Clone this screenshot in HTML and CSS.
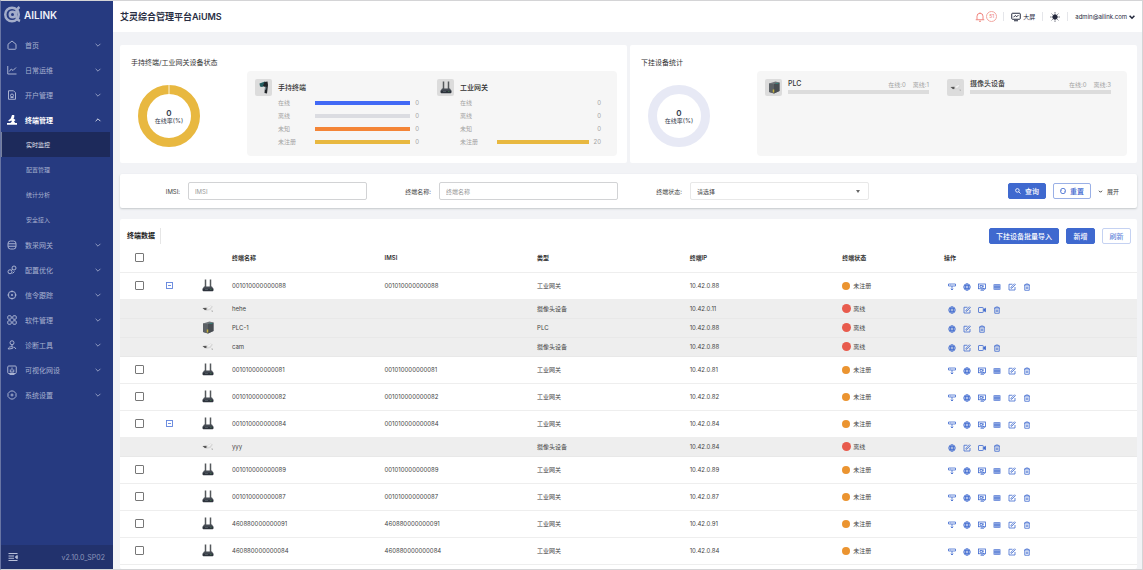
FILE: index.html
```html
<!DOCTYPE html>
<html lang="zh-CN">
<head>
<meta charset="utf-8">
<meta name="viewport" content="width=device-width, initial-scale=1">
<title>艾灵综合管理平台AiUMS</title>
<link rel="stylesheet" href="styles.css">
</head>
<body>
<svg class="sprite" aria-hidden="true">
  <symbol id="i-down" viewBox="0 0 10 10"><path d="M2 3.5 5 6.5 8 3.5"/></symbol>
  <symbol id="i-up" viewBox="0 0 10 10"><path d="M2 6.5 5 3.5 8 6.5"/></symbol>
  <symbol id="i-home" viewBox="0 0 20 20"><path d="M2 8.5 10 2l8 6.500V17a1.500 1.500 0 0 1-1.500 1.500h-13A1.500 1.500 0 0 1 2 17z"/></symbol>
  <symbol id="i-chart" viewBox="0 0 20 20"><path d="M1.500 2v16H19M4.500 13l4-5 3.500 3 6-6"/></symbol>
  <symbol id="i-doc" viewBox="0 0 20 20"><path d="M3 1.500h10l4 4v13H3z"/><circle cx="10" cy="11" r="3"/><path d="M7 15h6"/></symbol>
  <symbol id="i-scope" viewBox="0 0 20 20"><path stroke="none" fill="currentColor" d="M10 0h4.500v4.500L13 7l4 3-3 3 2.500 3H20v3.500H0V16h6.500L9.500 13.500 9 11l-5 2-1.500-2L7.500 7z"/></symbol>
  <symbol id="i-db" viewBox="0 0 20 20"><rect x="2" y="2" width="16" height="16" rx="5"/><path d="M2 7.500h16M2 12.500h16"/></symbol>
  <symbol id="i-link" viewBox="0 0 20 20"><circle cx="14" cy="6" r="4"/><circle cx="6" cy="13.500" r="4"/><path d="M8.500 10.500 11.500 8.500M11 17l4-4"/></symbol>
  <symbol id="i-target" viewBox="0 0 20 20"><circle cx="10" cy="10" r="7.500"/><path d="M10 1v3.500M10 15.500V19M1 10h3.500M15.500 10H19M8 10h4M10 8v4"/></symbol>
  <symbol id="i-grid" viewBox="0 0 20 20"><rect x="1.500" y="1.500" width="7" height="7" rx="2"/><rect x="11.500" y="1.500" width="7" height="7" rx="2"/><rect x="1.500" y="11.500" width="7" height="7" rx="2"/><rect x="11.500" y="11.500" width="7" height="7" rx="2"/></symbol>
  <symbol id="i-tool" viewBox="0 0 20 20"><circle cx="10" cy="5.500" r="4"/><path d="M10 9.500v4M2.500 18c0-3 3-5 7.500-4.500 3 .3 3 3 0 3.500-3 .5-5 1-7.500 1zM14 13.500l4 4.500"/></symbol>
  <symbol id="i-vis" viewBox="0 0 20 20"><rect x="1.500" y="2" width="17" height="15" rx="2"/><path d="M10 5v6M6.500 9v5h7V9M5 19h10"/></symbol>
  <symbol id="i-set" viewBox="0 0 20 20"><path d="M7 2h6l5 5v6l-5 5H7l-5-5V7z"/><circle cx="10" cy="10" r="2"/></symbol>
  <symbol id="i-fold" viewBox="0 0 20 18"><path d="M1 2h18M1 7h11M1 11.500h11M1 16h18"/><path fill="currentColor" d="m18.500 6-4 3.200 4 3.200z"/></symbol>
  <symbol id="i-bell" viewBox="0 0 20 20"><path d="M4 15V8.500a6 6 0 0 1 12 0V15M1.500 15.500h17M8 18.500h4M10 1v1.500"/></symbol>
  <symbol id="i-screen" viewBox="0 0 20 18"><rect x="1.500" y="1.500" width="17" height="12" rx="1.500"/><path d="M5 9.500 8.500 6l3 2.500L15 5M6 16.500h8"/></symbol>
  <symbol id="i-sun" viewBox="0 0 20 20"><circle cx="10" cy="10" r="4.500" fill="currentColor"/><path d="M10 .8v2M10 17.200v2M.8 10h2M17.200 10h2M3.500 3.500l1.400 1.400M15.100 15.100l1.400 1.400M3.500 16.500l1.400-1.400M15.100 4.900l1.400-1.400"/></symbol>
  <symbol id="i-search" viewBox="0 0 10 10"><circle cx="4" cy="4" r="3"/><path d="m6.200 6.200 3 3"/></symbol>
  <symbol id="i-reset" viewBox="0 0 10 10"><path d="M1 4.500a4 4 0 0 1 8 0M9 5.500a4 4 0 0 1-8 0M0 4l1 1.500L2.500 4M7.500 6 9 4.500 10 6"/></symbol>
  <symbol id="i-import" viewBox="0 0 16 16"><path d="M1 2h14v4H1zM4 4h1M8 6v8M5.500 11.500 8 14l2.500-2.500"/></symbol>
  <symbol id="i-globe" viewBox="0 0 16 16"><circle cx="8" cy="8" r="6.500"/><ellipse cx="8" cy="8" rx="3" ry="6.500"/><path d="M1.500 8h13M2.500 5h11M2.500 11h11"/></symbol>
  <symbol id="i-remote" viewBox="0 0 16 16"><rect x="1" y="2" width="14" height="9.500"/><path d="M4 5h5v3.500H4zM11 5v2.500M8 11.500V14M10 9l3 5M5 14.500h7"/></symbol>
  <symbol id="i-board" viewBox="0 0 16 16"><rect x="2" y="3.500" width="12" height="9"/><path d="M6 3.500v9M10 3.500v9M2 6.500h12M2 9.500h12"/></symbol>
  <symbol id="i-edit" viewBox="0 0 16 16"><path d="M9 2.500H2v11.500h12V8M6 10.500V8.500l7-7 1.800 1.800-7 7z"/></symbol>
  <symbol id="i-video" viewBox="0 0 16 16"><rect x="1" y="3" width="9.500" height="10" rx="1"/><path fill="currentColor" d="m11.500 7 3.500-2.500v7L11.500 9z"/></symbol>
  <symbol id="i-trash" viewBox="0 0 16 16"><path d="M2 4h12M5.500 4V2h5v2M3.500 4v10.500h9V4M6.500 7v5M9.500 7v5"/></symbol>
  <symbol id="i-minus" viewBox="0 0 14 14"><rect x="1" y="1" width="12" height="12"/><path d="M4 7h6"/></symbol>
  <symbol id="d-router" viewBox="0 0 24 26"><g stroke="none"><path fill="#55595c" d="M5.500 1h3v16h-3zM15.500 1h3v16h-3z"/><path fill="#474d55" d="M4 15h16l3 5H1z"/><path fill="#2d333c" d="M1 19.500h22V23l-1.500 1.500h-19L1 23z"/><path fill="#6e7a80" d="M6 21h6v1H6z"/><path fill="#4c9a57" d="M16 21h3v1h-3z"/></g></symbol>
  <symbol id="d-plc" viewBox="0 0 24 26"><g stroke="none"><path fill="#70757a" d="M2 5 15 1l8 2v17l-11 5-10-3z"/><path fill="#484d52" d="m12 6 11-3v17l-11 5z"/><path fill="#5b6065" d="m2 5 10 1.500V25L2 22z"/><path fill="#c8b33a" d="M9.500 17h3v6h-3z"/><path fill="#2f8a80" d="M15 4.500h6v1.500h-6z"/></g></symbol>
  <symbol id="d-camera" viewBox="0 0 24 26"><g stroke="none"><path fill="#d8d8d8" d="m8 12 9-5 5 2-5 7-9 2z"/><path fill="#f4f4f4" d="m10 12 7-4 2 1-5 5z"/><path fill="#555" d="m1 12 8-.5v4l-3 1z"/><path fill="#bcbcbc" d="M18 17h4v3h-2z"/></g></symbol>
  <symbol id="d-handheld" viewBox="0 0 24 26"><g stroke="none"><path fill="#245d60" d="m3 5 11-4 3 7-9 4-4-1z"/><path fill="#202428" d="m13 2 6-1 1 7-2 17-5-1 1-12-4-2z"/><path fill="#698188" d="m14 11 3 1-1 6-2-1z"/></g></symbol>
</svg>

<div class="app">
  <aside class="sidebar">
    <div class="brand">
      <svg class="brand-mark" viewBox="0 0 36 34" aria-hidden="true"><circle cx="16" cy="17" r="13.500"/><circle cx="17" cy="17" r="5.500"/><path d="M31 2c-7 5-7 10-7 15s1 10 8 13"/></svg>
      <span class="brand-name">AILINK</span>
    </div>
    <nav class="menu" aria-label="主菜单">
      <button class="menu-item"><svg class="icon"><use href="#i-home"/></svg><span>首页</span><svg class="caret"><use href="#i-down"/></svg></button>
      <button class="menu-item"><svg class="icon"><use href="#i-chart"/></svg><span>日常运维</span><svg class="caret"><use href="#i-down"/></svg></button>
      <button class="menu-item"><svg class="icon"><use href="#i-doc"/></svg><span>开户管理</span><svg class="caret"><use href="#i-down"/></svg></button>
      <button class="menu-item is-open" aria-expanded="true"><svg class="icon"><use href="#i-scope"/></svg><span>终端管理</span><svg class="caret"><use href="#i-up"/></svg></button>
      <a class="submenu-item is-active" href="#" aria-current="page">实时监控</a>
      <a class="submenu-item" href="#">配置管理</a>
      <a class="submenu-item" href="#">统计分析</a>
      <a class="submenu-item" href="#">安全接入</a>
      <button class="menu-item"><svg class="icon"><use href="#i-db"/></svg><span>数采网关</span><svg class="caret"><use href="#i-down"/></svg></button>
      <button class="menu-item"><svg class="icon"><use href="#i-link"/></svg><span>配置优化</span><svg class="caret"><use href="#i-down"/></svg></button>
      <button class="menu-item"><svg class="icon"><use href="#i-target"/></svg><span>信令跟踪</span><svg class="caret"><use href="#i-down"/></svg></button>
      <button class="menu-item"><svg class="icon"><use href="#i-grid"/></svg><span>软件管理</span><svg class="caret"><use href="#i-down"/></svg></button>
      <button class="menu-item"><svg class="icon"><use href="#i-tool"/></svg><span>诊断工具</span><svg class="caret"><use href="#i-down"/></svg></button>
      <button class="menu-item"><svg class="icon"><use href="#i-vis"/></svg><span>可视化网设</span><svg class="caret"><use href="#i-down"/></svg></button>
      <button class="menu-item"><svg class="icon"><use href="#i-set"/></svg><span>系统设置</span><svg class="caret"><use href="#i-down"/></svg></button>
    </nav>
    <div class="sidebar-foot">
      <button class="fold" aria-label="收起菜单"><svg class="icon"><use href="#i-fold"/></svg></button>
      <span>v2.10.0_SP02</span>
    </div>
  </aside>

  <div class="page">
    <header class="topbar">
      <h1>艾灵综合管理平台AiUMS</h1>
      <div class="topbar-tools">
        <button class="alerts" aria-label="告警 51"><svg class="icon"><use href="#i-bell"/></svg><span class="badge">51</span></button>
        <button class="tool"><svg class="icon"><use href="#i-screen"/></svg><span>大屏</span></button>
        <button class="tool" aria-label="主题"><svg class="icon"><use href="#i-sun"/></svg></button>
        <button class="tool user"><span>admin@ailink.com</span><svg class="caret"><use href="#i-down"/></svg></button>
      </div>
    </header>

    <main class="content">
      <section class="stats">
        <article class="card stat">
          <h2>手持终端/工业网关设备状态</h2>
          <div class="stat-body">
            <div class="donut">
              <svg viewBox="0 0 62 62" aria-hidden="true"><circle class="ring ring-gold" cx="31" cy="31" r="26.500"/><path class="ring-gap" d="M31 0v9"/></svg>
              <div class="donut-label"><strong>0</strong><span>在线率(%)</span></div>
            </div>
            <div class="panel">
              <div class="group">
                <span class="tile"><svg><use href="#d-handheld"/></svg></span>
                <div class="group-main">
                  <h3>手持终端</h3>
                  <div class="meter"><span>在线</span><i class="bar blue"></i><b>0</b></div>
                  <div class="meter"><span>离线</span><i class="bar grey"></i><b>0</b></div>
                  <div class="meter"><span>未知</span><i class="bar orange"></i><b>0</b></div>
                  <div class="meter"><span>未注册</span><i class="bar gold"></i><b>0</b></div>
                </div>
              </div>
              <div class="group">
                <span class="tile"><svg><use href="#d-router"/></svg></span>
                <div class="group-main">
                  <h3>工业网关</h3>
                  <div class="meter"><span>在线</span><i class="bar"></i><b>0</b></div>
                  <div class="meter"><span>离线</span><i class="bar"></i><b>0</b></div>
                  <div class="meter"><span>未知</span><i class="bar"></i><b>0</b></div>
                  <div class="meter"><span>未注册</span><i class="bar gold"></i><b>20</b></div>
                </div>
              </div>
            </div>
          </div>
        </article>
        <article class="card stat">
          <h2>下挂设备统计</h2>
          <div class="stat-body">
            <div class="donut">
              <svg viewBox="0 0 62 62" aria-hidden="true"><circle class="ring ring-pale" cx="31" cy="31" r="26.500"/></svg>
              <div class="donut-label"><strong>0</strong><span>在线率(%)</span></div>
            </div>
            <div class="panel">
              <div class="group">
                <span class="tile"><svg><use href="#d-plc"/></svg></span>
                <div class="group-main">
                  <div class="device-head"><h3>PLC</h3><span>在线:0</span><span>离线:1</span></div>
                  <i class="bar track"></i>
                </div>
              </div>
              <div class="group">
                <span class="tile"><svg><use href="#d-camera"/></svg></span>
                <div class="group-main">
                  <div class="device-head"><h3>摄像头设备</h3><span>在线:0</span><span>离线:3</span></div>
                  <i class="bar track"></i>
                </div>
              </div>
            </div>
          </div>
        </article>
      </section>

      <form class="card filter">
        <div class="field"><label for="imsi">IMSI:</label><input id="imsi" type="text" placeholder="IMSI"></div>
        <div class="field"><label for="name">终端名称:</label><input id="name" type="text" placeholder="终端名称"></div>
        <div class="field"><label for="state">终端状态:</label><div class="select"><select id="state"><option>请选择</option><option>未注册</option><option>离线</option></select></div></div>
        <div class="filter-actions">
          <button type="button" class="btn primary"><svg class="icon"><use href="#i-search"/></svg>查询</button>
          <button type="button" class="btn outline"><svg class="icon"><use href="#i-reset"/></svg>重置</button>
          <button type="button" class="expand"><svg class="icon"><use href="#i-down"/></svg>展开</button>
        </div>
      </form>

      <section class="card list">
        <div class="list-bar">
          <h2>终端数据</h2>
          <div class="list-actions">
            <button class="btn primary">下挂设备批量导入</button>
            <button class="btn primary">新增</button>
            <button class="btn soft">刷新</button>
          </div>
        </div>
        <table>
          <colgroup><col class="c-check"><col class="c-toggle"><col class="c-pic"><col class="c-text"><col class="c-text"><col class="c-text"><col class="c-text"><col class="c-state"><col></colgroup>
          <thead>
            <tr><th class="check"><input type="checkbox" aria-label="全选"></th><th></th><th></th><th>终端名称</th><th>IMSI</th><th>类型</th><th>终端IP</th><th>终端状态</th><th>操作</th></tr>
          </thead>
          <tbody id="rows"></tbody>
        </table>
      </section>
    </main>
  </div>
</div>
<script src="app.js"></script>
</body>
</html>
```

FILE: styles.css
```css
* { box-sizing: border-box; }

body, h1, h2, h3 { margin: 0; }

body, button, input, select {
  font-family: Inter, "Noto Sans CJK SC", sans-serif;
  font-size: 6px;
  color: #444;
}

button { padding: 0; border: 0; background: none; cursor: pointer; }
a { text-decoration: none; }

svg { display: block; fill: none; stroke: currentColor; stroke-width: 2; }
.sprite { position: absolute; width: 0; height: 0; }
.icon { width: 10px; height: 10px; flex: none; }
.caret { width: 8px; height: 8px; flex: none; stroke-width: 1; }

.app {
  display: flex;
  height: 100vh;
  border: 1px solid #d4d4d6;
  border-left-color: #6875a4;
  overflow: hidden;
}

/* Sidebar */
.sidebar {
  display: flex;
  flex-direction: column;
  flex: none;
  width: 112px;
  background: #263a80;
  color: #a9b2d0;
}
.brand { display: flex; align-items: center; gap: 2px; height: 31px; padding: 0 3px 4px; }
.brand-mark { width: 18px; height: 17px; stroke: #a3adca; stroke-width: 5; }
.brand-name { font-size: 10px; font-weight: 600; color: #eef0f8; }
.menu { flex: 1; }
.menu-item {
  display: flex;
  align-items: center;
  gap: 8px;
  width: 100%;
  height: 25px;
  padding: 0 11px 0 6px;
  font-size: 7px;
  color: #a9b2d0;
  text-align: left;
}
.menu-item span { flex: 1; }
.menu-item.is-open { color: #fff; font-weight: 700; }
.submenu-item {
  display: flex;
  align-items: center;
  height: 25px;
  margin-right: 3px;
  padding-left: 24px;
  border-left: 1px solid transparent;
  color: #a9b2d0;
}
.submenu-item.is-active { background: #1d2a5b; border-left-color: #77819f; color: #e4e7f0; }
.sidebar-foot {
  display: flex;
  align-items: center;
  justify-content: space-between;
  height: 24px;
  padding: 0 8px 0 7px;
  background: #22326d;
  font-size: 7px;
  color: #8c96bb;
}
.fold { color: #b8c0da; }

/* Top bar */
.page { flex: 1; min-width: 0; display: flex; flex-direction: column; background: #f2f3f6; }
.topbar {
  display: flex;
  align-items: center;
  justify-content: space-between;
  height: 31px;
  padding: 0 6px 0 7px;
  background: #fff;
}
.topbar h1 { font-size: 9px; font-weight: 600; color: #282d42; }
.topbar-tools { display: flex; align-items: center; }
.alerts { display: flex; align-items: center; gap: 1px; padding-right: 6px; color: #ee6b62; }
.alerts svg { stroke-width: 1.6; }
.badge {
  width: 11px;
  height: 11px;
  border: 1px solid #f2a7a1;
  border-radius: 50%;
  font-size: 5px;
  line-height: 9px;
  color: #ee7b73;
}
.tool { display: flex; align-items: center; gap: 2px; height: 9px; padding: 0 7px; border-left: 1px solid #e5e6ea; color: #23283c; }
.tool.user { padding-right: 0; gap: 1px; }
.user .caret { stroke-width: 2; }

/* Cards */
.content { flex: 1; min-height: 0; display: flex; flex-direction: column; gap: 11px; padding: 13px 5px 0 7px; }
.card { background: #fff; border-radius: 2px; }
.card h2, .card h3 { font-size: 7px; font-weight: 400; line-height: 10px; color: #333; }

.stats { display: grid; grid-template-columns: 1fr 1fr; gap: 3px; }
.stat { padding: 13px 10px 7px 11px; }
.stat-body { display: flex; gap: 47px; align-items: center; padding-left: 7px; margin-top: 3px; }
.donut { display: grid; place-items: center; width: 62px; flex: none; padding-top: 4px; }
.donut > * { grid-area: 1 / 1; }
.donut svg { width: 62px; height: 62px; }
.ring { stroke-width: 9; }
.ring-gold { stroke: #e8b840; }
.ring-pale { stroke: #e7e9f5; }
.ring-gap { stroke: #fbf1d8; stroke-width: 1; }
.donut-label { display: flex; flex-direction: column; align-items: center; line-height: 8px; padding-top: 3px; color: #333a4c; }
.donut-label strong { font-size: 8px; font-weight: 600; }

.panel { flex: 1; display: flex; gap: 18px; height: 85px; padding: 8px 16px 0 8px; background: #f6f6f6; border-radius: 4px; }
.group { flex: 1; display: flex; gap: 6px; }
.tile { display: grid; place-items: center; width: 17px; height: 17px; flex: none; background: #dcdcdc; border-radius: 2px; }
.tile svg { width: 12px; height: 13px; }
.group-main { flex: 1; }
.group-main h3 { font-weight: 500; }
.group-main > h3 { padding: 4px 0 3px; }
.meter { display: flex; align-items: center; height: 13px; color: #a2a2a2; }
.meter span { width: 37px; }
.meter b { font-weight: 400; padding-left: 5px; }
.bar { flex: 1; height: 4px; }
.blue { background: #4169f5; }
.grey { background: #dbdce1; }
.orange { background: #f48537; }
.gold { background: #e8b840; }
.device-head { display: flex; align-items: center; gap: 7px; color: #a2a2a2; }
.device-head h3 { flex: 1; }
.track { display: block; margin-top: 1px; background: #dcdcdc; }

/* Filter */
.filter {
  display: grid;
  grid-template-columns: repeat(3, 1fr) 264px;
  align-items: center;
  gap: 4px;
  padding: 8px 0;
  box-shadow: 0 1px 2px #c4c8cb;
}
.field { display: flex; align-items: center; }
.field label { width: 68px; padding-right: 8px; text-align: right; flex: none; }
.field input, .select { flex: 1; min-width: 0; height: 18px; border: 1px solid #d2d3d5; border-radius: 2px; background: #fff; }
.field input { padding: 0 6px; }
.field input::placeholder { color: #999; }
.select { position: relative; border-color: #e8e8e8; }
.select select { width: 100%; height: 100%; padding: 0 6px; border: 0; background: none; appearance: none; }
.select::after {
  content: "";
  position: absolute;
  top: 7px;
  right: 8px;
  border: 2px solid transparent;
  border-top: 3px solid #666;
  pointer-events: none;
}
.filter-actions { display: flex; justify-content: flex-end; gap: 7px; padding-right: 18px; }
.btn {
  display: flex;
  align-items: center;
  justify-content: center;
  gap: 4px;
  min-width: 29px;
  height: 16px;
  padding: 0 6px;
  border: 1px solid #3f69cf;
  border-radius: 2px;
  font-size: 7px;
  font-weight: 500;
}
.btn .icon { width: 6px; height: 6px; stroke-width: 1.4; }
.primary { background: #3f69cf; color: #fff; }
.outline { border-color: #9ab0e6; color: #3f69cf; }
.soft { border-color: #c5d2f2; color: #6a8adb; }
.expand { display: flex; align-items: center; gap: 4px; }
.expand .icon { width: 5px; height: 5px; }

/* Device list */
.list { flex: 1; }
.list-bar { display: flex; align-items: center; justify-content: space-between; padding: 9px 6px 0 7px; }
.list-bar h2 { padding-right: 5px; line-height: 16px; border-right: 1px solid #e6e6e6; font-weight: 600; color: #222; }
.list-actions { display: flex; gap: 7px; }

table { width: 100%; table-layout: fixed; border-collapse: collapse; }
.c-check { width: 38px; }
.c-toggle { width: 22px; }
.c-pic { width: 52px; }
.c-text { width: 15%; }
.c-state { width: 10%; }
th, td { height: 27px; padding: 0; border-bottom: 1px solid #eee; text-align: left; vertical-align: middle; }
th { height: 28px; font-weight: 600; color: #333; }
tr.child td { height: 19px; background: #eee; border-bottom-color: #e8e8e8; }
.check { text-align: center; }
input[type="checkbox"] {
  display: block;
  width: 9px;
  height: 9px;
  margin: 0 auto;
  appearance: none;
  border: 1px solid #777;
  border-radius: 1px;
  background: #fff;
}
.toggle { display: block; margin: 0 auto; color: #5f83dc; }
.toggle svg { width: 7px; height: 7px; stroke-width: 1.8; }
.pic { padding-left: 22px; }
.pic svg { width: 12px; height: 13px; }
.status { display: flex; align-items: center; gap: 3px; }
.dot { width: 8px; height: 8px; border-radius: 50%; background: #eb9430; }
.child .status { gap: 2px; }
.child .dot { width: 9px; height: 9px; background: #e85b4d; }
.ops { display: flex; gap: 7px; padding: 2px 0 0 4px; }
.ops button { color: #3f69cf; }
.ops svg { width: 8px; height: 8px; stroke-width: 1.6; }
```

FILE: app.js
```js
const devices = [
  { name: '001010000000088', ip: '10.42.0.88', children: [
    { name: 'hehe', kind: 'camera', ip: '10.42.0.11' },
    { name: 'PLC-1', kind: 'plc', ip: '10.42.0.88' },
    { name: 'cam', kind: 'camera', ip: '10.42.0.88' }
  ] },
  { name: '001010000000081', ip: '10.42.0.81' },
  { name: '001010000000082', ip: '10.42.0.82' },
  { name: '001010000000084', ip: '10.42.0.84', children: [
    { name: 'yyy', kind: 'camera', ip: '10.42.0.84' }
  ] },
  { name: '001010000000089', ip: '10.42.0.89' },
  { name: '001010000000087', ip: '10.42.0.87' },
  { name: '460880000000091', ip: '10.42.0.91' },
  { name: '460880000000084', ip: '10.42.0.84' }
];

const labels = { import: '导入', globe: '网络', remote: '远程', board: '面板', edit: '编辑', video: '视频', trash: '删除' };
const actions = {
  router: ['import', 'globe', 'remote', 'board', 'edit', 'trash'],
  camera: ['globe', 'edit', 'video', 'trash'],
  plc: ['globe', 'edit', 'trash']
};
const types = { router: '工业网关', camera: '摄像头设备', plc: 'PLC' };

const icon = id => `<svg aria-hidden="true"><use href="#${id}"/></svg>`;
const ops = kind => actions[kind].map(a => `<button aria-label="${labels[a]}">${icon('i-' + a)}</button>`).join('');

function row(d, child) {
  const kind = d.kind || 'router';
  return `<tr class="${child ? 'child' : 'parent'}">
    <td class="check">${child ? '' : `<input type="checkbox" aria-label="选择 ${d.name}">`}</td>
    <td>${d.children ? `<button class="toggle" aria-label="收起">${icon('i-minus')}</button>` : ''}</td>
    <td class="pic">${icon('d-' + kind)}</td>
    <td>${d.name}</td>
    <td>${child ? '' : d.name}</td>
    <td>${types[kind]}</td>
    <td>${d.ip}</td>
    <td><div class="status"><span class="dot"></span>${child ? '离线' : '未注册'}</div></td>
    <td><div class="ops">${ops(kind)}</div></td>
  </tr>`;
}

document.getElementById('rows').innerHTML = devices
  .map(d => row(d, false) + (d.children || []).map(c => row(c, true)).join(''))
  .join('');
```
